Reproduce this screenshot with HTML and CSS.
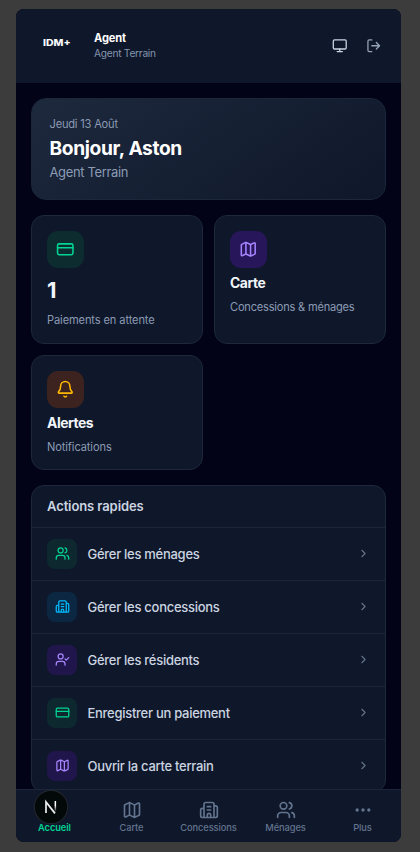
FILE: index.html
```html
<!DOCTYPE html>
<html lang="fr">
<head>
<meta charset="utf-8">
<meta name="viewport" content="width=device-width, initial-scale=1">
<title>Accueil</title>
<link rel="stylesheet" href="styles.css">
</head>
<body>
<svg class="sprite" aria-hidden="true">
  <symbol id="card" viewBox="0 0 24 24"><rect x="2" y="5" width="20" height="14" rx="2"/><path d="M2 10h20"/></symbol>
  <symbol id="map" viewBox="0 0 24 24"><path d="M14.1 5.55a2 2 0 0 0 1.8 0l3.65-1.83A1 1 0 0 1 21 4.62v12.76a1 1 0 0 1-.55.9l-4.55 2.27a2 2 0 0 1-1.8 0l-4.2-2.1a2 2 0 0 0-1.8 0l-3.65 1.83A1 1 0 0 1 3 19.38V6.62a1 1 0 0 1 .55-.9L8.1 3.45a2 2 0 0 1 1.8 0zM15 5.76v15M9 3.24v15"/></symbol>
  <symbol id="bell" viewBox="0 0 24 24"><path d="M6 8a6 6 0 0 1 12 0c0 4.5 1.4 6 2.74 7.33A1 1 0 0 1 20 17H4a1 1 0 0 1-.74-1.67C4.6 14 6 12.5 6 8M10.27 21a2 2 0 0 0 3.46 0"/></symbol>
  <symbol id="users" viewBox="0 0 24 24"><path d="M16 21v-2a4 4 0 0 0-4-4H6a4 4 0 0 0-4 4v2M22 21v-2a4 4 0 0 0-3-3.87M16 3.13a4 4 0 0 1 0 7.75"/><circle cx="9" cy="7" r="4"/></symbol>
  <symbol id="check" viewBox="0 0 24 24"><path d="M16 21v-2a4 4 0 0 0-4-4H6a4 4 0 0 0-4 4v2M16 11l2 2 4-4"/><circle cx="9" cy="7" r="4"/></symbol>
  <symbol id="building" viewBox="0 0 24 24"><path d="M6 22V4a2 2 0 0 1 2-2h8a2 2 0 0 1 2 2v18zM6 12H4a2 2 0 0 0-2 2v6a2 2 0 0 0 2 2h2M18 9h2a2 2 0 0 1 2 2v9a2 2 0 0 1-2 2h-2M10 6h4M10 10h4M10 14h4M10 18h4"/></symbol>
  <symbol id="building-door" viewBox="0 0 24 24"><path d="M6 21V5a2 2 0 0 1 2-2h8a2 2 0 0 1 2 2v16M6 10H4a2 2 0 0 0-2 2v7a2 2 0 0 0 2 2h16a2 2 0 0 0 2-2V9a2 2 0 0 0-2-2h-2M10 8h4M10 12h4M14 21v-3a2 2 0 0 0-4 0v3"/></symbol>
  <symbol id="monitor" viewBox="0 0 24 24"><rect x="2" y="3" width="20" height="14" rx="2"/><path d="M8 21h8M12 17v4"/></symbol>
  <symbol id="logout" viewBox="0 0 24 24"><path d="M9 21H5a2 2 0 0 1-2-2V5a2 2 0 0 1 2-2h4M16 17l5-5-5-5M21 12H9"/></symbol>
  <symbol id="chevron" viewBox="0 0 24 24"><path d="m9 18 6-6-6-6"/></symbol>
  <symbol id="dots" viewBox="0 0 24 24"><circle cx="5" cy="12" r="1"/><circle cx="12" cy="12" r="1"/><circle cx="19" cy="12" r="1"/></symbol>
</svg>
<div class="screen">
  <header class="topbar">
    <div class="logo"><span>IDM+</span></div>
    <div class="who"><strong>Agent</strong><span>Agent Terrain</span></div>
    <div class="tools"><svg class="icon"><use href="#monitor"/></svg><svg class="icon dim"><use href="#logout"/></svg></div>
  </header>
  <main class="content">
    <section class="hero"><p class="date">Jeudi 13 Août</p><h1>Bonjour, Aston</h1><p class="role">Agent Terrain</p></section>
    <section class="stats">
      <article class="stat"><div class="tile green"><svg class="icon"><use href="#card"/></svg></div><div class="count">1</div><p class="wide">Paiements en attente</p></article>
      <article class="stat"><div class="tile purple"><svg class="icon"><use href="#map"/></svg></div><h2>Carte</h2><p>Concessions &amp; ménages</p></article>
      <article class="stat"><div class="tile amber"><svg class="icon"><use href="#bell"/></svg></div><h2>Alertes</h2><p class="wide">Notifications</p></article>
    </section>
    <section class="actions">
      <h3>Actions rapides</h3>
      <div class="row"><div class="tile green"><svg class="icon"><use href="#users"/></svg></div><span>Gérer les ménages</span><svg class="icon chev"><use href="#chevron"/></svg></div>
      <div class="row"><div class="tile blue"><svg class="icon"><use href="#building-door"/></svg></div><span>Gérer les concessions</span><svg class="icon chev"><use href="#chevron"/></svg></div>
      <div class="row"><div class="tile purple"><svg class="icon"><use href="#check"/></svg></div><span>Gérer les résidents</span><svg class="icon chev"><use href="#chevron"/></svg></div>
      <div class="row"><div class="tile green"><svg class="icon"><use href="#card"/></svg></div><span>Enregistrer un paiement</span><svg class="icon chev"><use href="#chevron"/></svg></div>
      <div class="row"><div class="tile purple"><svg class="icon"><use href="#map"/></svg></div><span>Ouvrir la carte terrain</span><svg class="icon chev"><use href="#chevron"/></svg></div>
    </section>
  </main>
  <nav class="tabs">
    <div class="tab active"><div class="space"></div><span>Accueil</span>
      <svg class="badge" viewBox="0 0 36 36"><defs><linearGradient id="fade" x1="0" y1="0" x2="0" y2="1"><stop offset=".4" stop-color="#fff"/><stop offset="1" stop-color="#fff" stop-opacity="0"/></linearGradient></defs><circle cx="18" cy="18" r="16.7" fill="#030809" stroke="#20242b" stroke-width="1.2"/><path d="M13 24V13l9 11.4" fill="none" stroke="#eee" stroke-width="1.7"/><path d="M21.6 12h1.5v11h-1.5z" fill="url(#fade)"/></svg>
    </div>
    <div class="tab"><svg class="icon"><use href="#map"/></svg><span>Carte</span></div>
    <div class="tab"><svg class="icon"><use href="#building-door"/></svg><span>Concessions</span></div>
    <div class="tab"><svg class="icon"><use href="#users"/></svg><span>Ménages</span></div>
    <div class="tab"><svg class="icon"><use href="#dots"/></svg><span>Plus</span></div>
  </nav>
</div>
</body>
</html>
```
FILE: styles.css
```css
* { box-sizing: border-box; }
body { margin: 0; height: 852px; padding: 9px 19px 10px 16px; background: #3c3c3c; font-family: Inter, "Liberation Sans", sans-serif; overflow: hidden; }
h1, h2, h3, p { margin: 0; }
.sprite { position: absolute; width: 0; height: 0; }
.icon { display: block; flex: none; width: 18.5px; height: 18.5px; fill: none; stroke: currentColor; stroke-width: 2; stroke-linecap: round; stroke-linejoin: round; }
.screen { width: 385px; height: 833px; display: flex; flex-direction: column; overflow: hidden; border-radius: 8px; background: #020316; }
.topbar { flex: none; height: 74px; display: flex; align-items: center; padding: 0 20px 0 27px; background: #0f172a; }
.logo { width: 51px; margin-top: -7px; font-size: 9px; line-height: 12px; font-weight: 800; color: #f8fafc; }
.logo span { display: inline-block; transform: scaleX(1.17); transform-origin: left; }
.who { display: flex; flex-direction: column; }
.who strong { font-size: 11.1px; line-height: 15px; font-weight: 700; color: #fff; letter-spacing: -.15px; }
.who span { font-size: 10.2px; line-height: 15px; color: #8495b0; letter-spacing: -.26px; }
.tools { margin-left: auto; display: flex; gap: 18px; color: #cbd5e1; }
.tools .icon { width: 15.5px; height: 15.5px; }
.tools .dim { color: #94a3b8; }
.content { flex: 1; min-height: 0; overflow: hidden; padding: 15px 15px 0; display: flex; flex-direction: column; gap: 15px; }
.hero { flex: none; height: 102px; padding: 16px 17.5px; border-radius: 15px; border: 1px solid #1b273a; background: linear-gradient(145deg, #1d293d, #0f172a); color: #8b9bb4; }
.date { font-size: 11.1px; line-height: 18px; letter-spacing: -.2px; }
.hero h1 { font-size: 19.2px; line-height: 30px; font-weight: 700; color: #fff; letter-spacing: -.38px; }
.role { font-size: 13px; line-height: 18px; letter-spacing: -.35px; }
.stats { flex: none; display: grid; grid-template-columns: 172px 172px; grid-template-rows: 128.5px 115.5px; gap: 11px; }
.stat { border: 1px solid #1d283a; border-radius: 13px; background: #0f172a; padding: 15px; }
.tile { display: grid; place-items: center; flex: none; }
.stat .tile { width: 37px; height: 37px; border-radius: 11px; }
.green { background: #0c2c30; color: #00d492; }
.purple { background: #28165a; color: #a684ff; }
.amber { background: #3c231f; color: #ffb900; }
.blue { background: #0b2742; color: #00bcff; }
.count { margin-top: 7px; font-size: 22px; line-height: 30px; font-weight: 700; color: #f1f5f9; }
.stat p { font-size: 11.1px; line-height: 18px; color: #8b9bb4; margin-top: 6px; letter-spacing: -.22px; }
.stat p.wide { letter-spacing: -.12px; }
.stat h2 { margin-top: 5px; font-size: 13.9px; line-height: 20px; font-weight: 700; color: #f1f5f9; letter-spacing: -.45px; }
.stat h2 + p { margin-top: 5px; }
.actions { flex: none; height: 308px; border: 1px solid #1d283a; border-radius: 13px; background: #0f172a; overflow: hidden; }
.actions h3 { height: 41px; padding: 0 15px; font-size: 13px; line-height: 41px; font-weight: 600; color: #cbd5e1; letter-spacing: -.1px; }
.row { height: 53px; display: flex; align-items: center; padding: 0 14px 1px 15px; border-top: 1px solid #1a2538; color: #cbd5e1; font-size: 13px; font-weight: 500; letter-spacing: -.28px; }
.row .tile { width: 30px; height: 30px; border-radius: 8px; margin-right: 10.5px; }
.row .tile .icon { width: 15px; height: 15px; }
.row .purple { background: #21164b; }
.row .green { background: #0d292f; }
.row .chev { width: 13px; height: 13px; margin-right: 1px; margin-left: auto; color: #64748b; }
.tabs { flex: none; height: 53px; display: grid; grid-template-columns: repeat(5, 1fr); border-top: 1px solid #1b263b; background: #0f172a; color: #62748e; }
.tab { position: relative; display: flex; flex-direction: column; align-items: center; padding-top: 10px; font-size: 9.3px; line-height: 14px; font-weight: 500; letter-spacing: -.1px; }
.tab .icon { width: 20px; height: 20px; margin-bottom: 1px; }
.space { height: 21px; }
.active { color: #00d492; font-weight: 600; }
.badge { position: absolute; left: 17px; top: -1px; width: 36px; height: 36px; }
```
